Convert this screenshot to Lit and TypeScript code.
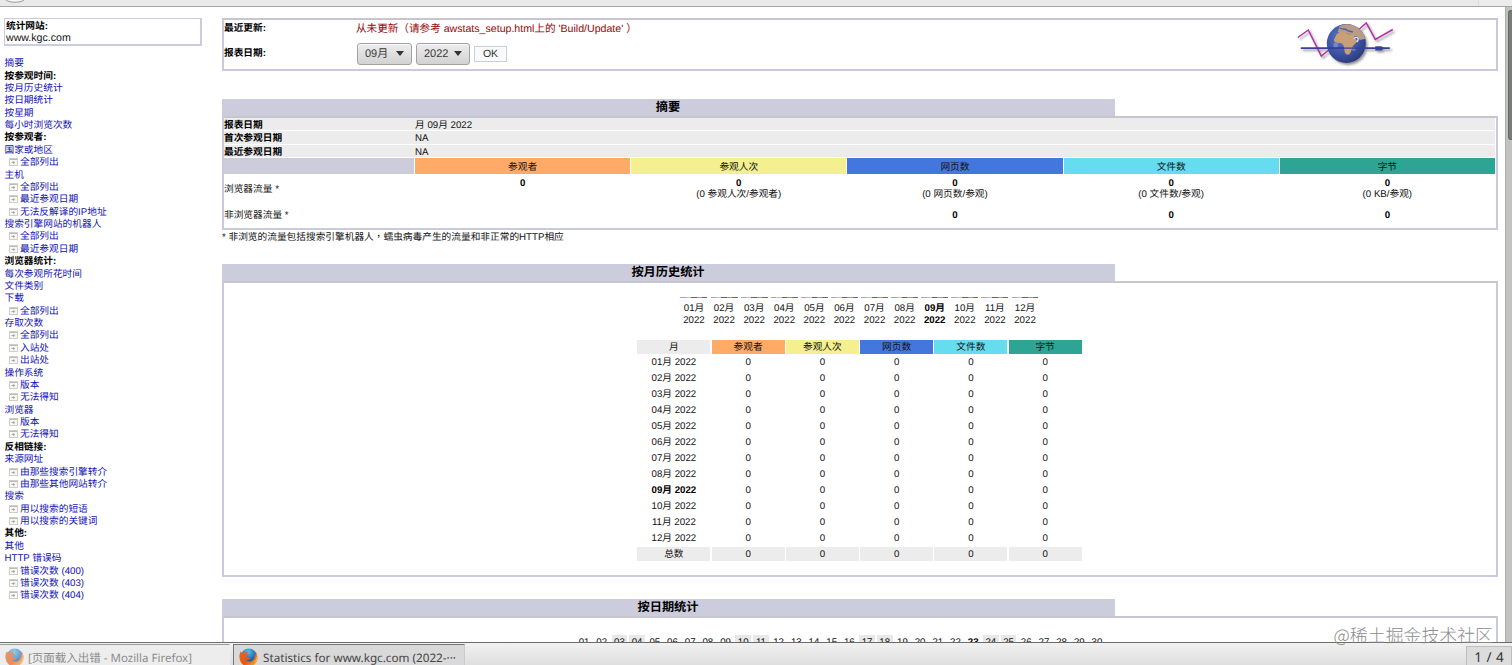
import { LitElement, html, css } from "lit";
import { customElement } from "lit/decorators.js";
import { classMap } from "lit/directives/class-map.js";

type Kind = "head" | "link" | "sub";

const MENU: [Kind, string][] = [
  ["link", "摘要"],
  ["head", "按参观时间:"],
  ["link", "按月历史统计"],
  ["link", "按日期统计"],
  ["link", "按星期"],
  ["link", "每小时浏览次数"],
  ["head", "按参观者:"],
  ["link", "国家或地区"],
  ["sub", "全部列出"],
  ["link", "主机"],
  ["sub", "全部列出"],
  ["sub", "最近参观日期"],
  ["sub", "无法反解译的IP地址"],
  ["link", "搜索引擎网站的机器人"],
  ["sub", "全部列出"],
  ["sub", "最近参观日期"],
  ["head", "浏览器统计:"],
  ["link", "每次参观所花时间"],
  ["link", "文件类别"],
  ["link", "下载"],
  ["sub", "全部列出"],
  ["link", "存取次数"],
  ["sub", "全部列出"],
  ["sub", "入站处"],
  ["sub", "出站处"],
  ["link", "操作系统"],
  ["sub", "版本"],
  ["sub", "无法得知"],
  ["link", "浏览器"],
  ["sub", "版本"],
  ["sub", "无法得知"],
  ["head", "反相链接:"],
  ["link", "来源网址"],
  ["sub", "由那些搜索引擎转介"],
  ["sub", "由那些其他网站转介"],
  ["link", "搜索"],
  ["sub", "用以搜索的短语"],
  ["sub", "用以搜索的关键词"],
  ["head", "其他:"],
  ["link", "其他"],
  ["link", "HTTP 错误码"],
  ["sub", "错误次数 (400)"],
  ["sub", "错误次数 (403)"],
  ["sub", "错误次数 (404)"],
];

const pad = (n: number) => String(n).padStart(2, "0");
const MONTHS = Array.from({ length: 12 }, (_, i) => pad(i + 1) + "月");
const DAYS = Array.from({ length: 30 }, (_, i) => i + 1);
const CURRENT_MONTH = 8;
const CURRENT_DAY = 23;
const WEEKEND = new Set([3, 4, 10, 11, 17, 18, 24, 25]);

const COLS = [
  { cls: "c-u", name: "参观者", avg: "" },
  { cls: "c-v", name: "参观人次", avg: "(0 参观人次/参观者)" },
  { cls: "c-p", name: "网页数", avg: "(0 网页数/参观)" },
  { cls: "c-h", name: "文件数", avg: "(0 文件数/参观)" },
  { cls: "c-k", name: "字节", avg: "(0 KB/参观)" },
];

const pageIcon = html`<svg class="pg" width="9" height="8" viewBox="0 0 9 8">
  <rect x="0.5" y="0.5" width="8" height="7" fill="#f6f6f4" stroke="#cfcfca"/>
  <path d="M1 1.5h7" stroke="#bcbbb6"/>
  <path d="M2.5 4.5h3.5M4.7 3.2v2.8" stroke="#a5a59f" stroke-width=".9"/>
</svg>`;

const firefox = (id: string) => html`<svg class="fx" width="19" height="19" viewBox="0 0 19 19">
  <defs>
    <radialGradient id="${id}b" cx=".45" cy=".2" r=".8">
      <stop offset="0" stop-color="#5cc0ec"/><stop offset=".55" stop-color="#2173b8"/><stop offset="1" stop-color="#123a72"/>
    </radialGradient>
    <linearGradient id="${id}o" x1="0" y1="0" x2="1" y2="1">
      <stop offset="0" stop-color="#e8661b"/><stop offset=".55" stop-color="#e4581a"/><stop offset="1" stop-color="#f9c535"/>
    </linearGradient>
  </defs>
  <circle cx="9.8" cy="8.8" r="8.3" fill="url(#${id}b)"/>
  <path d="M1.800 3.200C.2 6-.1 9.500 1.300 13c1.600 3.700 4.900 5.700 8.700 5.600 5-.2 8.600-4.200 8.600-9.100 0-2.300-.8-4.400-2-5.700.6 1.500.7 2.700.5 3.900-.5-1.400-1.200-2.300-1.900-2.800 1.100 3.600.5 6.700-2.200 8.100-2.200 1.100-4.900.4-6-1.400 1.300.5 2.700.2 3.800-.7.6-.5.300-1.100-.4-1.100-1.200.1-2.600-.2-3-1.400.1-.6.6-.9 1.300-.8.5 0 .9-.4 1-.9-.8-.4-1.600-.9-1.700-1.700.4-.7.8-1.100 1.300-1.500-1.600 0-2.800.5-3.600 1.400-1-.2-1.900-.1-2.600.2-.7-.5-1.100-1.300-1.300-1.900z" fill="url(#${id}o)"/>
  <path d="M16.600 3.800c1.900 3.500 1.600 8.200-1.800 11.100 3.800-1.600 4.700-7.300 1.800-11.100z" fill="#fbd34a"/>
</svg>`;

const logo = html`<svg class="logo" width="104" height="49" viewBox="0 0 104 49">
  <defs>
    <radialGradient id="sea" cx=".4" cy=".35" r=".7">
      <stop offset="0" stop-color="#6077c4"/><stop offset=".6" stop-color="#3c54a6"/><stop offset="1" stop-color="#2a3874"/>
    </radialGradient>
    <filter id="sh" x="-20%" y="-20%" width="150%" height="150%">
      <feDropShadow dx="1.800" dy="2" stdDeviation="1.300" flood-color="#333" flood-opacity=".5"/>
    </filter>
    <clipPath id="ball"><circle cx="52.500" cy="26.500" r="19.500"/></clipPath>
  </defs>
  <g transform="translate(.8 -3)">
    <g filter="url(#sh)">
      <path d="M4 20.500 14.500 13 27.500 39 35 33" fill="none" stroke="#b52fa4" stroke-width="1.500"/>
      <path d="M65 12.500 72.500 6 81.500 22.500 99 12.500" fill="none" stroke="#b52fa4" stroke-width="1.500"/>
      <circle cx="52.500" cy="26.500" r="19.500" fill="url(#sea)"/>
      <path d="M7 31.200h89" stroke="#3b3f9c" stroke-width="1.700"/>
      <path d="M81.500 29.200h6l2 1.200 4 .8-4 .8-2 1.500h-6z" fill="#34439c"/>
    </g>
    <g clip-path="url(#ball)">
      <path d="M46 9c7-3 15-2 20 3 4 3 6 8 5 10l-5 1-3-4-4 1-3-3-5-1-3 1-4-2z" fill="#b99b86"/>
      <path d="M43 17c3-2 7-2 9-1 3 2 6 1 8 3 1 3 3 4 4 5l-5 5c0 3-2 4-2 6-1 3-3 3-5 2-2-3-1-5-2-7 0-2-1-3-3-4-4 0-6 0-7-3z" fill="#c99f78"/>
      <path d="M46 11c3 2 5 0 7 2s4 1 6 2" fill="none" stroke="#4b61ae" stroke-width="1.500"/>
      <path d="M60 22c1-2 3-2 4-1 1 1.500 0 3-1 4" fill="none" stroke="#dfe6f2" stroke-width="1.300"/>
      <circle cx="42" cy="28" r="2.500" fill="#8498d2" opacity=".7"/>
      <circle cx="60" cy="32" r="2" fill="#8498d2" opacity=".6"/>
      <path d="M33 31.200h40" stroke="#37408f" stroke-width="1.300"/>
    </g>
  </g>
</svg>`;

@customElement("app-root")
export class AppRoot extends LitElement {
  static styles = css`
    :host {
      display: flex;
      flex-direction: column;
      position: relative;
      width: 1512px;
      height: 665px;
      overflow: hidden;
      box-sizing: border-box;
      background: #fff;
      color: #111;
      font: 9.7px/12px "Liberation Sans", "Noto Sans CJK SC", sans-serif;
      text-rendering: geometricPrecision;
      white-space: nowrap;
    }
    * { box-sizing: border-box; }
    svg { display: block; flex: none; }
    b { color: #000; }
    .chrome { height: 7px; flex: none; background: #e9e9e9; border-bottom: 1px solid #a6a6a6; display: flex; justify-content: space-between; padding-left: 5px; }
    .chrome .edge { width: 34px; border-left: 1px solid #dcdcdc; background: #ececec; }
    .view { height: 635px; flex: none; display: flex; overflow: hidden; }
    .side { width: 222px; flex: none; padding: 11px 0 0 4px; }
    .site { width: 198px; height: 28px; border: 2px solid #cccce0; border-width: 1px 2px 2px 1px; padding: 1px 0 0 1px; }
    .site div { height: 12px; line-height: 13px; }
    .site .host { font-size: 10.6px; line-height: 12px; }
    .menu { padding: 11.500px 0 0 0.500px; }
    .row { height: 12.385px; display: flex; align-items: center; color: #1212b4; }
    .row span { line-height: 12px; padding-top: 1px; }
    .row.head { color: #000; font-weight: bold; }
    .row.sub { padding-left: 4.500px; gap: 2px; }
    .pg { margin-top: -1px; }
    .main { width: 1283px; flex: none; padding-top: 11px; }
    .scroll { width: 7px; flex: none; background: #c2c3c1; border-left: 1px solid #adadab; padding: 3px 0 0 2px; }
    .thumb { height: 130px; background: #797b78; border-radius: 3px 0 0 3px; border: 1px solid #686a67; border-right: 0; }
    .box { width: 1276px; border: 2px solid #cacade; border-top-color: #c6c5d0; }
    .info { height: 53px; display: flex; justify-content: space-between; padding-right: 99px; }
    .info .left { display: flex; flex-direction: column; }
    .line { display: flex; align-items: center; height: 18px; }
    .line b { width: 132px; flex: none; }
    .line.date { height: 31px; }
    .line.date b { padding-top: 1px; }
    .warn { color: #960505; font-size: 10.6px; }
    .sel { height: 22px; border: 1px solid #a3a3a3; border-radius: 3px; background: linear-gradient(#ededed, #d2d2d2); display: flex; align-items: center; justify-content: space-between; padding: 0 7px; font-size: 11px; color: #3a3a3a; box-shadow: inset 0 1px #f8f8f8; }
    .sel.m { width: 55px; margin-left: 1px; }
    .sel.y { width: 54px; margin-left: 4px; }
    .sel i { border: 4px solid transparent; border-top: 5px solid #333; border-bottom: 0; }
    .ok { width: 33px; height: 16px; margin-left: 4px; border: 1px solid #c9cfd6; background: #f8fafc; text-align: center; line-height: 15px; font-size: 10.5px; color: #333; }
    .title { width: 893px; height: 17px; background: #ccccdd; text-align: center; font-weight: bold; font-size: 12.2px; line-height: 17.500px; padding-right: 1px; color: #000; }
    .t1 { margin-top: 28px; }
    .t2 { margin-top: 20px; }
    .t3 { margin-top: 22px; }
    .sum { height: 114px; }
    .grey { display: grid; grid-template-columns: 191px 1fr; height: 12.300px; line-height: 15px; margin: 0 1px 1px 0; background: #ececec; }
    .grid { display: grid; grid-template-columns: 190px repeat(5, 215.200px); column-gap: 1px; text-align: center; }
    .grid .lab { text-align: left; }
    .hd { height: 16px; line-height: 19px; }
    .hd.blank { background: #ccccdd; }
    .r1 { height: 28px; padding-top: 4px; line-height: 11.500px; }
    .r1.lab { padding-top: 10px; }
    .r2 { height: 24px; line-height: 28px; }
    .c-u { background: #ffaa66; }
    .c-v { background: #f4f090; }
    .c-p { background: #4477dd; }
    .c-h { background: #66ddee; }
    .c-k { background: #2ea495; }
    .note { height: 14px; padding-top: 2px; line-height: 12px; }
    .tc { font-family: "Noto Sans CJK TC", sans-serif; line-height: 1; }
    .hist { height: 296px; display: flex; flex-direction: column; align-items: center; padding: 14px 1px 0 0; }
    .months { display: grid; grid-template-columns: repeat(12, 27px); column-gap: 3.100px; text-align: center; line-height: 11.500px; }
    .ticks { display: flex; height: 1px; margin-bottom: 5px; }
    .ticks i { width: 5.400px; height: 1px; }
    .ticks .c-u { background: #e39a45; }
    .ticks .c-v { background: #dccb4e; }
    .ticks .c-p { background: #3a62d0; }
    .ticks .c-h { background: #45bcd4; }
    .ticks .c-k { background: #218b7d; }
    .cur { font-weight: bold; color: #000; }
    .tbl { display: grid; grid-template-columns: repeat(6, 73px); column-gap: 1.250px; text-align: center; margin-top: 14px; }
    .tbl div { height: 16px; line-height: 16.600px; }
    .tbl .h { height: 14px; line-height: 15.600px; margin-bottom: 1px; }
    .tbl .g { height: 14px; line-height: 15.600px; background: #ececec; }
    .daily { height: 60px; padding-top: 17px; display: flex; justify-content: center; }
    .days { display: grid; grid-template-columns: repeat(30, 15.700px); column-gap: 2px; text-align: center; padding-right: 39px; }
    .days div { height: 14px; line-height: 15px; }
    .days .we { background: #e8e8e8; }
    .bar { height: 23px; flex: none; border-top: 1px solid #6c6c6c; background: linear-gradient(#f1f1f1, #dfdfdf); display: flex; font: 11.500px/16px "Noto Sans", "Noto Sans CJK SC", sans-serif; overflow: hidden; }
    .task { display: flex; height: 26px; margin-top: 1px; padding: 3px 0 0 5px; gap: 4px; border: 1px solid #9b9b9b; border-bottom: 0; }
    .task span { line-height: 21px; }
    .task.a { width: 230px; color: #8c8c8c; border-left: 0; border-right-color: #eee; background: #ededed; }
    .task.a .fx { opacity: .65; }
    .task.b { width: 232px; margin-left: 3px; gap: 5px; color: #444; background: #d9d9d9; border-color: #777 #ccc #777 #777; font-size: 11.700px; }
    .pager { margin: 3px 0 0 auto; width: 46px; height: 24px; border: 1px solid #bdbdbd; background: #dcdcdc; text-align: center; font-size: 13.500px; line-height: 20px; color: #333; word-spacing: 1px; }
    .mark { position: absolute; right: 19px; top: 624px; font: 300 17.900px/22px "Noto Sans CJK SC", sans-serif; color: #8d8d8d; }
  `;

  private monthly() {
    return html`<div class="box hist">
      <div class="months">
        ${MONTHS.map((m, i) => html`<div class=${classMap({ cur: i === CURRENT_MONTH })}>
          <div class="ticks">${COLS.map((c) => html`<i class=${c.cls}></i>`)}</div>
          ${m}<br />2022
        </div>`)}
      </div>
      <div class="tbl">
        <div class="h g">月</div>
        ${COLS.map((c) => html`<div class="h ${c.cls}">${c.name}</div>`)}
        ${MONTHS.map((m, i) => html`
          <div class=${classMap({ cur: i === CURRENT_MONTH })}>${m} 2022</div>
          ${COLS.map(() => html`<div>0</div>`)}`)}
        <div class="g">总数</div>
        ${COLS.map(() => html`<div class="g">0</div>`)}
      </div>
    </div>`;
  }

  render() {
    return html`
      <div class="chrome">
        <svg width="20" height="3" viewBox="0 0 20 3"><path d="M1 0C5 3 15 3 19 0" fill="#f6f6f6" stroke="#999"/></svg>
        <div class="edge"></div>
      </div>
      <div class="view">
        <div class="side">
          <div class="site"><div><b>统计网站:</b></div><div class="host">www.kgc.com</div></div>
          <div class="menu">
            ${MENU.map(([k, t]) => html`<div class="row ${k}">${k === "sub" ? pageIcon : ""}<span>${t}</span></div>`)}
          </div>
        </div>
        <div class="main">
          <div class="box info">
            <div class="left">
              <div class="line"><b>最近更新:</b><span class="warn">从未更新（请参考 awstats_setup.html上的 'Build/Update' ）</span></div>
              <div class="line date"><b>报表日期:</b>
                <div class="sel m">09月<i></i></div>
                <div class="sel y">2022<i></i></div>
                <div class="ok">OK</div>
              </div>
            </div>
            ${logo}
          </div>

          <div class="title t1">摘要</div>
          <div class="box sum">
            <div class="grey"><b>报表日期</b><span>月 09月 2022</span></div>
            <div class="grey"><b>首次参观日期</b><span>NA</span></div>
            <div class="grey"><b>最近参观日期</b><span>NA</span></div>
            <div class="grid">
              <div class="hd blank"></div>
              ${COLS.map((c) => html`<div class="hd ${c.cls}">${c.name}</div>`)}
              <div class="lab r1">浏览器流量 *</div>
              ${COLS.map((c) => html`<div class="r1"><b>0</b><br />${c.avg}</div>`)}
              <div class="lab r2">非浏览器流量 *</div>
              ${COLS.map((_, i) => html`<div class="r2"><b>${i < 2 ? "" : "0"}</b></div>`)}
            </div>
          </div>
          <div class="note">* 非浏览的流量包括搜索引擎机器人<span class="tc" lang="zh-TW">，</span>蠕虫病毒产生的流量和非正常的HTTP相应</div>

          <div class="title t2">按月历史统计</div>
          ${this.monthly()}

          <div class="title t3">按日期统计</div>
          <div class="box daily">
            <div class="days">
              ${DAYS.map((d) => html`<div class=${classMap({ we: WEEKEND.has(d), cur: d === CURRENT_DAY })}>${pad(d)}</div>`)}
            </div>
          </div>
        </div>
        <div class="scroll"><div class="thumb"></div></div>
      </div>
      <div class="bar">
        <div class="task a">${firefox("fa")}<span>[页面载入出错 - Mozilla Firefox]</span></div>
        <div class="task b">${firefox("fb")}<span>Statistics for www.kgc.com (2022-···</span></div>
        <div class="pager">1 / 4</div>
      </div>
      <div class="mark">@稀土掘金技术社区</div>
    `;
  }
}
